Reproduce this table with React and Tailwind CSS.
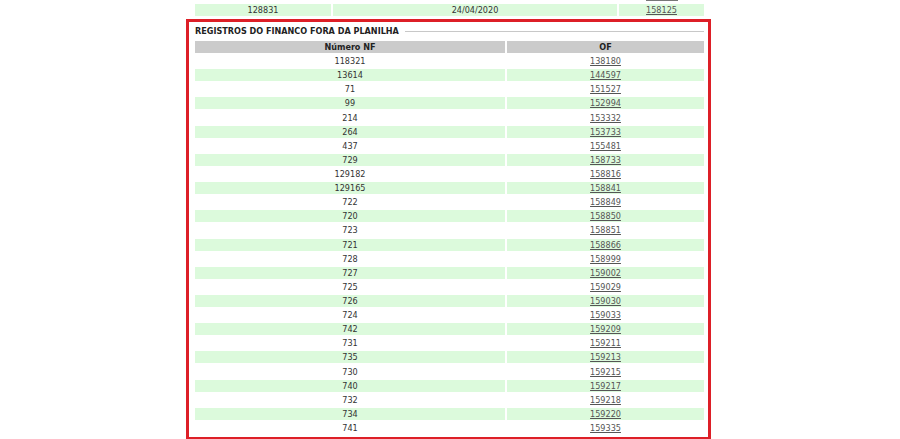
import React from "react";

const rows = [
  ["118321", "138180"], ["13614", "144597"], ["71", "151527"], ["99", "152994"],
  ["214", "153332"], ["264", "153733"], ["437", "155481"], ["729", "158733"],
  ["129182", "158816"], ["129165", "158841"], ["722", "158849"], ["720", "158850"],
  ["723", "158851"], ["721", "158866"], ["728", "158999"], ["727", "159002"],
  ["725", "159029"], ["726", "159030"], ["724", "159033"], ["742", "159209"],
  ["731", "159211"], ["735", "159213"], ["730", "159215"], ["740", "159217"],
  ["732", "159218"], ["734", "159220"], ["741", "159335"],
];

const font = { fontFamily: '"DejaVu Sans Condensed", "DejaVu Sans", Tahoma, sans-serif' };

export default function App() {
  return (
    <div className="w-[900px] h-[439px] overflow-hidden bg-white text-[#333] text-[9px] leading-[12px]" style={font}>
      <div className="w-[525px] ml-[186px]">
        <div className="w-[509px] ml-[9px] grid grid-cols-[136px_284px_85px] gap-x-[2px]">
          <div className="h-[4px]" />
          <div className="h-[4px]" />
          <div className="h-[4px] flex justify-center">
            <div className="w-[32px] h-[1px] bg-[#777]" />
          </div>
          <div className="h-[12px] bg-[#dcfadc] text-center">128831</div>
          <div className="h-[12px] bg-[#dcfadc] text-center">24/04/2020</div>
          <div className="h-[12px] bg-[#dcfadc] text-center">
            <span className="underline text-[#555]">158125</span>
          </div>
        </div>
        <div className="mt-[3px] border-[3px] border-[#dd1f27] pl-[6px] pr-[4px] pt-[3px] pb-[3px]">
          <div className="flex items-center h-[12px] gap-[6px]">
            <span className="font-bold text-[#222] whitespace-nowrap">REGISTROS DO FINANCO FORA DA PLANILHA</span>
            <div className="flex-1 h-px bg-[#c8c8c8]" />
          </div>
          <div className="mt-[4px] w-[509px] grid grid-cols-[310px_197px] gap-x-[2px] gap-y-[2.12px]">
            <div className="h-[12px] bg-[#cbcbcb] text-center font-bold text-[#222]">Número NF</div>
            <div className="h-[12px] bg-[#cbcbcb] text-center font-bold text-[#222]">OF</div>
            {rows.map(([nf, of], i) => {
              const bg = i % 2 === 1 ? "bg-[#dcfadc]" : "bg-white";
              return (
                <React.Fragment key={i}>
                  <div className={`h-[12px] text-center ${bg}`}>{nf}</div>
                  <div className={`h-[12px] text-center ${bg}`}>
                    <span className="underline text-[#555]">{of}</span>
                  </div>
                </React.Fragment>
              );
            })}
          </div>
        </div>
      </div>
    </div>
  );
}
